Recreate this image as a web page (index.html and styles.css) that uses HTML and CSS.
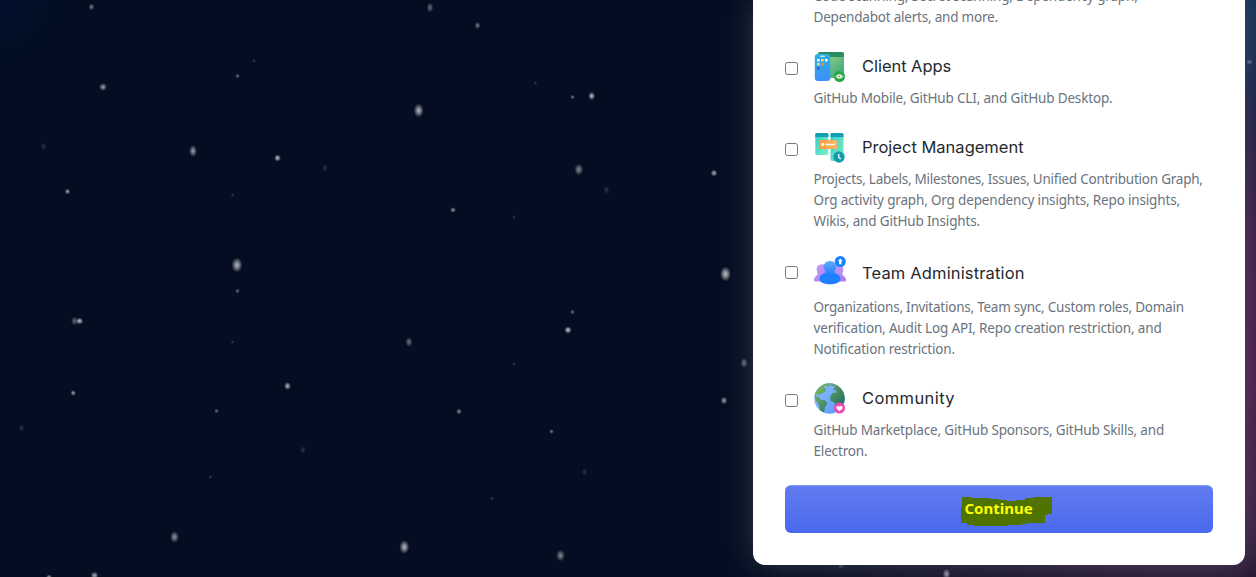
FILE: index.html
```html
<!DOCTYPE html>
<html lang="en">
<head>
<meta charset="utf-8">
<title>Features</title>
<link rel="stylesheet" href="styles.css">
</head>
<body>
<svg class="stars" viewBox="0 0 1256 577" aria-hidden="true">
<defs><radialGradient id="star"><stop offset="0" stop-color="#fff"/><stop offset=".35" stop-color="#fff" stop-opacity=".7"/><stop offset="1" stop-color="#fff" stop-opacity="0"/></radialGradient></defs>
<g fill="url(#star)">
<ellipse cx="91.5" cy="7" rx="3" ry="3.5" opacity=".45"/><ellipse cx="103" cy="87" rx="4" ry="4" opacity=".6"/><ellipse cx="254" cy="61" rx="2" ry="2" opacity=".2"/><ellipse cx="237.5" cy="76" rx="2.5" ry="2.5" opacity=".4"/><ellipse cx="43.5" cy="146.5" rx="3" ry="4" opacity=".16"/><ellipse cx="193" cy="151" rx="4" ry="6" opacity=".6"/><ellipse cx="277.5" cy="158" rx="3.5" ry="3.5" opacity=".75"/><ellipse cx="325" cy="168" rx="3" ry="4" opacity=".16"/><ellipse cx="67.5" cy="191.5" rx="3" ry="3" opacity=".6"/><ellipse cx="232.5" cy="195" rx="2" ry="2" opacity=".2"/><ellipse cx="237" cy="265" rx="5.5" ry="7.5" opacity=".7"/><ellipse cx="237.5" cy="291" rx="2.5" ry="2.5" opacity=".4"/>
<ellipse cx="430" cy="7.5" rx="3.5" ry="5" opacity=".4"/><ellipse cx="477.5" cy="25.5" rx="3" ry="3.5" opacity=".45"/><ellipse cx="535.5" cy="83" rx="2" ry="2" opacity=".2"/><ellipse cx="572.5" cy="97" rx="2.5" ry="2.5" opacity=".4"/><ellipse cx="591.7" cy="96" rx="3.5" ry="4.2" opacity=".75"/><ellipse cx="418.7" cy="110.5" rx="5" ry="7" opacity=".7"/><ellipse cx="578.8" cy="169.5" rx="4.5" ry="6" opacity=".5"/><ellipse cx="606.5" cy="190" rx="3" ry="4" opacity=".16"/><ellipse cx="714" cy="173" rx="3.5" ry="3.5" opacity=".65"/><ellipse cx="453" cy="210" rx="3" ry="3" opacity=".55"/><ellipse cx="514" cy="217" rx="2" ry="2" opacity=".18"/><ellipse cx="725.5" cy="274" rx="5.5" ry="7.5" opacity=".75"/>
<ellipse cx="74.5" cy="321" rx="3.5" ry="4.5" opacity=".38"/><ellipse cx="79.5" cy="321" rx="3.8" ry="3.5" opacity=".75"/><ellipse cx="232.5" cy="342" rx="2" ry="2" opacity=".18"/><ellipse cx="73.2" cy="393" rx="2.8" ry="3" opacity=".6"/><ellipse cx="287.5" cy="386" rx="3.5" ry="4" opacity=".7"/><ellipse cx="216.5" cy="411" rx="2.5" ry="2.5" opacity=".4"/><ellipse cx="21.5" cy="428" rx="3" ry="4" opacity=".16"/><ellipse cx="303" cy="450" rx="3" ry="4" opacity=".16"/><ellipse cx="210.5" cy="477" rx="2" ry="2" opacity=".2"/><ellipse cx="174.5" cy="537" rx="4.5" ry="6" opacity=".55"/><ellipse cx="94.5" cy="575.5" rx="4" ry="4" opacity=".65"/><ellipse cx="49" cy="577" rx="3" ry="2.5" opacity=".6"/>
<ellipse cx="572.5" cy="312" rx="2.5" ry="2.7" opacity=".4"/><ellipse cx="568" cy="330" rx="3.7" ry="3.7" opacity=".8"/><ellipse cx="409" cy="342" rx="3.7" ry="5" opacity=".42"/><ellipse cx="514" cy="364" rx="2" ry="2" opacity=".18"/><ellipse cx="459" cy="411.5" rx="3" ry="3.2" opacity=".5"/><ellipse cx="551.5" cy="431.5" rx="2.5" ry="2.5" opacity=".42"/><ellipse cx="584.5" cy="472" rx="3" ry="4" opacity=".16"/><ellipse cx="492" cy="498.5" rx="2" ry="2" opacity=".2"/><ellipse cx="404.3" cy="547" rx="5" ry="7" opacity=".7"/><ellipse cx="560.5" cy="555.5" rx="4.5" ry="6" opacity=".5"/><ellipse cx="724" cy="400.5" rx="3.5" ry="4" opacity=".6"/>
</g></svg>
<main class="page">
<section class="card">
<div class="feature"><p class="desc"><span>Code scanning, Secret scanning, Dependency graph,</span><span class="snug">Dependabot alerts, and more.</span></p></div>

<label class="feature">
<input type="checkbox">
<span class="head">
<svg class="icon" viewBox="0 0 32 32"><defs><linearGradient id="win" x2="1" y2="1"><stop stop-color="#b5d98d"/><stop offset="1" stop-color="#2fa477"/></linearGradient><linearGradient id="phone" x2="0" y2="1"><stop stop-color="#2dafe0"/><stop offset="1" stop-color="#3d91fb"/></linearGradient></defs>
<rect x="4" y="2" width="26" height="26" rx="2" fill="url(#win)"/><path d="M6 2h22a2 2 0 0 1 2 2v3H4V4a2 2 0 0 1 2-2z" fill="#288b61"/><rect x=".8" y="4" width="15.5" height="27" rx="3" fill="url(#phone)"/><rect x="6" y="5.5" width="5" height="1.5" rx=".7" fill="#b9e3f5"/>
<path d="M3 9h2.600v2.600H3zM11 9h2.600v2.600H11z" fill="#fff"/><path fill="#ffdc73" d="M7 9h2.600v2.600H7zM3 13h2.600v2.600H3z"/><path fill="#fb8b2c" d="M7 13h2.600v2.600H7z"/><path fill="#5350cb" d="M3 17h2.600v2.600H3z"/>
<circle cx="25.5" cy="26.5" r="5.5" fill="#29a744"/><circle cx="25.5" cy="26.5" r="1.6" fill="none" stroke="#fff" stroke-width="1.4"/><path d="m23.5 25-1.500 1.500 1.500 1.500m4-3 1.500 1.500-1.500 1.500" fill="none" stroke="#fff"/></svg>
<span class="title t1">Client Apps</span></span>
<span class="desc"><span>GitHub Mobile, GitHub CLI, and GitHub Desktop.</span></span>
</label>

<label class="feature">
<input type="checkbox">
<span class="head">
<svg class="icon" viewBox="0 0 32 32"><defs><linearGradient id="board" x2="1" y2="1"><stop stop-color="#35cbd0"/><stop offset="1" stop-color="#7df0bd"/></linearGradient><linearGradient id="task" x2="1"><stop stop-color="#ff993c"/><stop offset="1" stop-color="#ffba64"/></linearGradient></defs>
<rect x="1.3" y="2" width="13" height="22" rx="1.8" fill="url(#board)"/><rect x="16.5" y="2" width="13" height="28" rx="1.8" fill="url(#board)"/><path d="M3 2h10a1.500 1.500 0 0 1 1.500 1.500V6H1.300V3.500A1.500 1.500 0 0 1 3 2zm15 0h10a1.500 1.500 0 0 1 1.500 1.500V6h-13V3.500A1.500 1.500 0 0 1 18 2z" fill="#149eb1"/><rect x="5" y="9" width="18" height="9" rx="1.5" fill="url(#task)"/><circle cx="8.7" cy="13.5" r="1.5" fill="#fff"/><path d="M12 13.500h8" stroke="#fff" stroke-width="1.5" stroke-linecap="round"/><circle cx="25" cy="26" r="5.7" fill="#129daf"/><path d="M24.700 23v3.300l2 1.600" fill="none" stroke="#fff" stroke-width="1.3"/></svg>
<span class="title t2">Project Management</span></span>
<span class="desc"><span class="tight">Projects, Labels, Milestones, Issues, Unified Contribution Graph,</span><span>Org activity graph, Org dependency insights, Repo insights,</span><span>Wikis, and GitHub Insights.</span></span>
</label>

<label class="feature team">
<input type="checkbox">
<span class="head">
<svg class="icon" viewBox="0 0 32 32"><defs><linearGradient id="side" x2="1" y2="1"><stop stop-color="#c9a3f6"/><stop offset="1" stop-color="#a879f4"/></linearGradient><linearGradient id="lead" x2="0" y2="1"><stop stop-color="#64a9fa"/><stop offset=".6" stop-color="#1e80ff"/></linearGradient></defs>
<g fill="url(#side)"><path d="M7 7.500c5-1 7 3 6 7-.5 2 0 4 3 5l-1 5H1c-2-.5-1-4 1-5.500 3-2 1-3 .7-6C2.300 9.500 4 8 7 7.500z"/><path d="M25 7.500c-5-1-7 3-6 7 .5 2 0 4-3 5l1 5h14c2-.5 1-4-1-5.500-3-2-1-3-.7-6 .4-3-1.300-5-4.300-5.500z"/></g><path d="M16 4c4.500 0 7 3.500 6 7.500-.4 2-2 2.700-1.500 3.700 1 1.500 6 2 6 6.500 0 7.500-21 7.500-21 0 0-4.500 5-5 6-6.500.5-1-1.100-1.700-1.500-3.700-1-4 1.500-7.500 6-7.500z" fill="url(#lead)"/><circle cx="26.3" cy="4.5" r="5.5" fill="#1682fb"/><path d="M26.300 1.600 23.900 4h1.200v3.200h2.400V4h1.200z" fill="#fff"/></svg>
<span class="title t3">Team Administration</span></span>
<span class="desc"><span class="tight">Organizations, Invitations, Team sync, Custom roles, Domain</span><span>verification, Audit Log API, Repo creation restriction, and</span><span>Notification restriction.</span></span>
</label>

<label class="feature">
<input type="checkbox">
<span class="head">
<svg class="icon" viewBox="0 0 32 32"><defs><linearGradient id="sea" x2="1" y2="1"><stop stop-color="#8ebfff"/><stop offset="1" stop-color="#5798fa"/></linearGradient><linearGradient id="land" gradientUnits="userSpaceOnUse" x1="3" y1="3" x2="28" y2="28"><stop stop-color="#82b86c"/><stop offset="1" stop-color="#16695d"/></linearGradient><clipPath id="globe"><circle cx="15.5" cy="16.5" r="15.2"/></clipPath></defs>
<circle cx="15.5" cy="16.5" r="15.2" fill="url(#sea)"/><g clip-path="url(#globe)" fill="url(#land)"><path d="M2 6 8 0h8l-.5 4-2 1-2-1.500-2 1L12 7l-1 3-4 2-3 1-1.500-1L2 14.500l3 .5 1.500 2.500 4 .5 3 3-2.500 4-1 5.500-4-2-1-6-3-4-2-5z"/><path d="m16 1 5 0-1 3-3 0zM22 2l7 5 3 10-4 7-7 2-.5-5.500-4-1.500-.5-4 2.500-4 4-.5-1-2.500-2.500.5 1-3.500z"/></g><circle cx="25.500" cy="26" r="5.6" fill="#eb4db5"/><path d="M25.500 29c-6-3.600-2-6.500 0-4.300 2-2.200 6 .7 0 4.300z" fill="#fff"/></svg>
<span class="title t4">Community</span></span>
<span class="desc"><span>GitHub Marketplace, GitHub Sponsors, GitHub Skills, and</span><span>Electron.</span></span>
</label>
<button class="continue"><svg class="marker" viewBox="0 0 92 31" aria-hidden="true"><path d="M1 2h9v1h19v1h9v1h8v1h9V5h9V3h8V2h19v17h-4v1h-3v8H66v1h-6v1H46v1h-5v1H19v-1h-6v-1H6v-2H0V12h1z"/></svg><span>Continue</span></button>
</section>
</main>
<svg class="stars front" viewBox="0 0 1256 577" aria-hidden="true"><g fill="url(#star)"><ellipse cx="744" cy="363" rx="3.7" ry="5" opacity=".38"/><ellipse cx="1249.500" cy="62" rx="3.500" ry="3" opacity=".3"/><ellipse cx="946.500" cy="574" rx="4" ry="5.500" opacity=".55"/><ellipse cx="841" cy="566" rx="3.500" ry="3" opacity=".2"/></g></svg>
</body>
</html>
```
FILE: styles.css
```css
* { box-sizing: border-box; }
body {
  margin: 0;
  height: 577px;
  overflow: hidden;
  font-family: "Noto Sans", "Open Sans", sans-serif;
  background:
    radial-gradient(circle at 0 0, #01102e 0, rgba(1, 14, 34, .6) 60px, rgba(3, 14, 32, 0) 150px),
    linear-gradient(90deg, #040d21 0 770px, transparent 1150px),
    linear-gradient(#123156 0, #14224a 80px, #241b40 140px, #3b1a43 240px, #451a46 380px, #371d40 510px, #281935 577px);
}
.stars { position: absolute; inset: 0; width: 1256px; height: 577px; }
.front { pointer-events: none; }
.page { position: relative; display: flex; justify-content: flex-end; height: 577px; padding: 0 11px 12px 0; }
.card {
  display: flex;
  flex-direction: column;
  justify-content: flex-end;
  width: 492px;
  padding: 0 32px 32px;
  background: #fff;
  border-radius: 0 0 12px 12px;
  box-shadow: 0 0 32px rgba(255, 255, 255, .18);
}
.feature {
  display: grid;
  grid-template-columns: 13px 1fr;
  column-gap: 16px;
  row-gap: 6px;
  flex: none;
  margin-bottom: 22px;
}
.feature:nth-child(3) { margin-bottom: 25px; }
.feature:nth-child(5) { margin-bottom: 23px; }
.feature input { width: 13px; height: 13px; margin: 12px 0 0; }
.head { display: flex; align-items: center; gap: 16px; height: 32px; }
.icon { width: 32px; height: 32px; overflow: visible; }
.team { row-gap: 8px; }
.team input { margin-top: 9px; }
.title { font: 400 16.5px/32px Inter, sans-serif; color: #24292f; white-space: nowrap; }
.t1 { letter-spacing: -.05px; }
.t2 { letter-spacing: 0; }
.t3 { letter-spacing: .15px; }
.t4 { letter-spacing: .4px; }
.desc { grid-column: 2; margin: 0; font-size: 13.5px; line-height: 21px; color: #6a737d; }
.desc > span { display: block; width: max-content; margin-left: -.5px; white-space: nowrap; letter-spacing: -.165px; }
.desc > .snug { letter-spacing: -.21px; }
.desc > .tight { letter-spacing: -.235px; }
.continue {
  position: relative;
  flex: none;
  height: 48px;
  border: 0;
  border-top: 1px solid #849af4;
  border-radius: 6px;
  padding: 0 1px 2px 0;
  background: linear-gradient(#627cf0, #4968ed);
  font: 700 15px/45px "Noto Sans", sans-serif;
  text-align: center;
  color: #ff0;
}
.continue span { position: relative; }
.marker { position: absolute; left: 176px; top: 9px; width: 92px; height: 31px; }
.marker path { fill: #507300; }
```
